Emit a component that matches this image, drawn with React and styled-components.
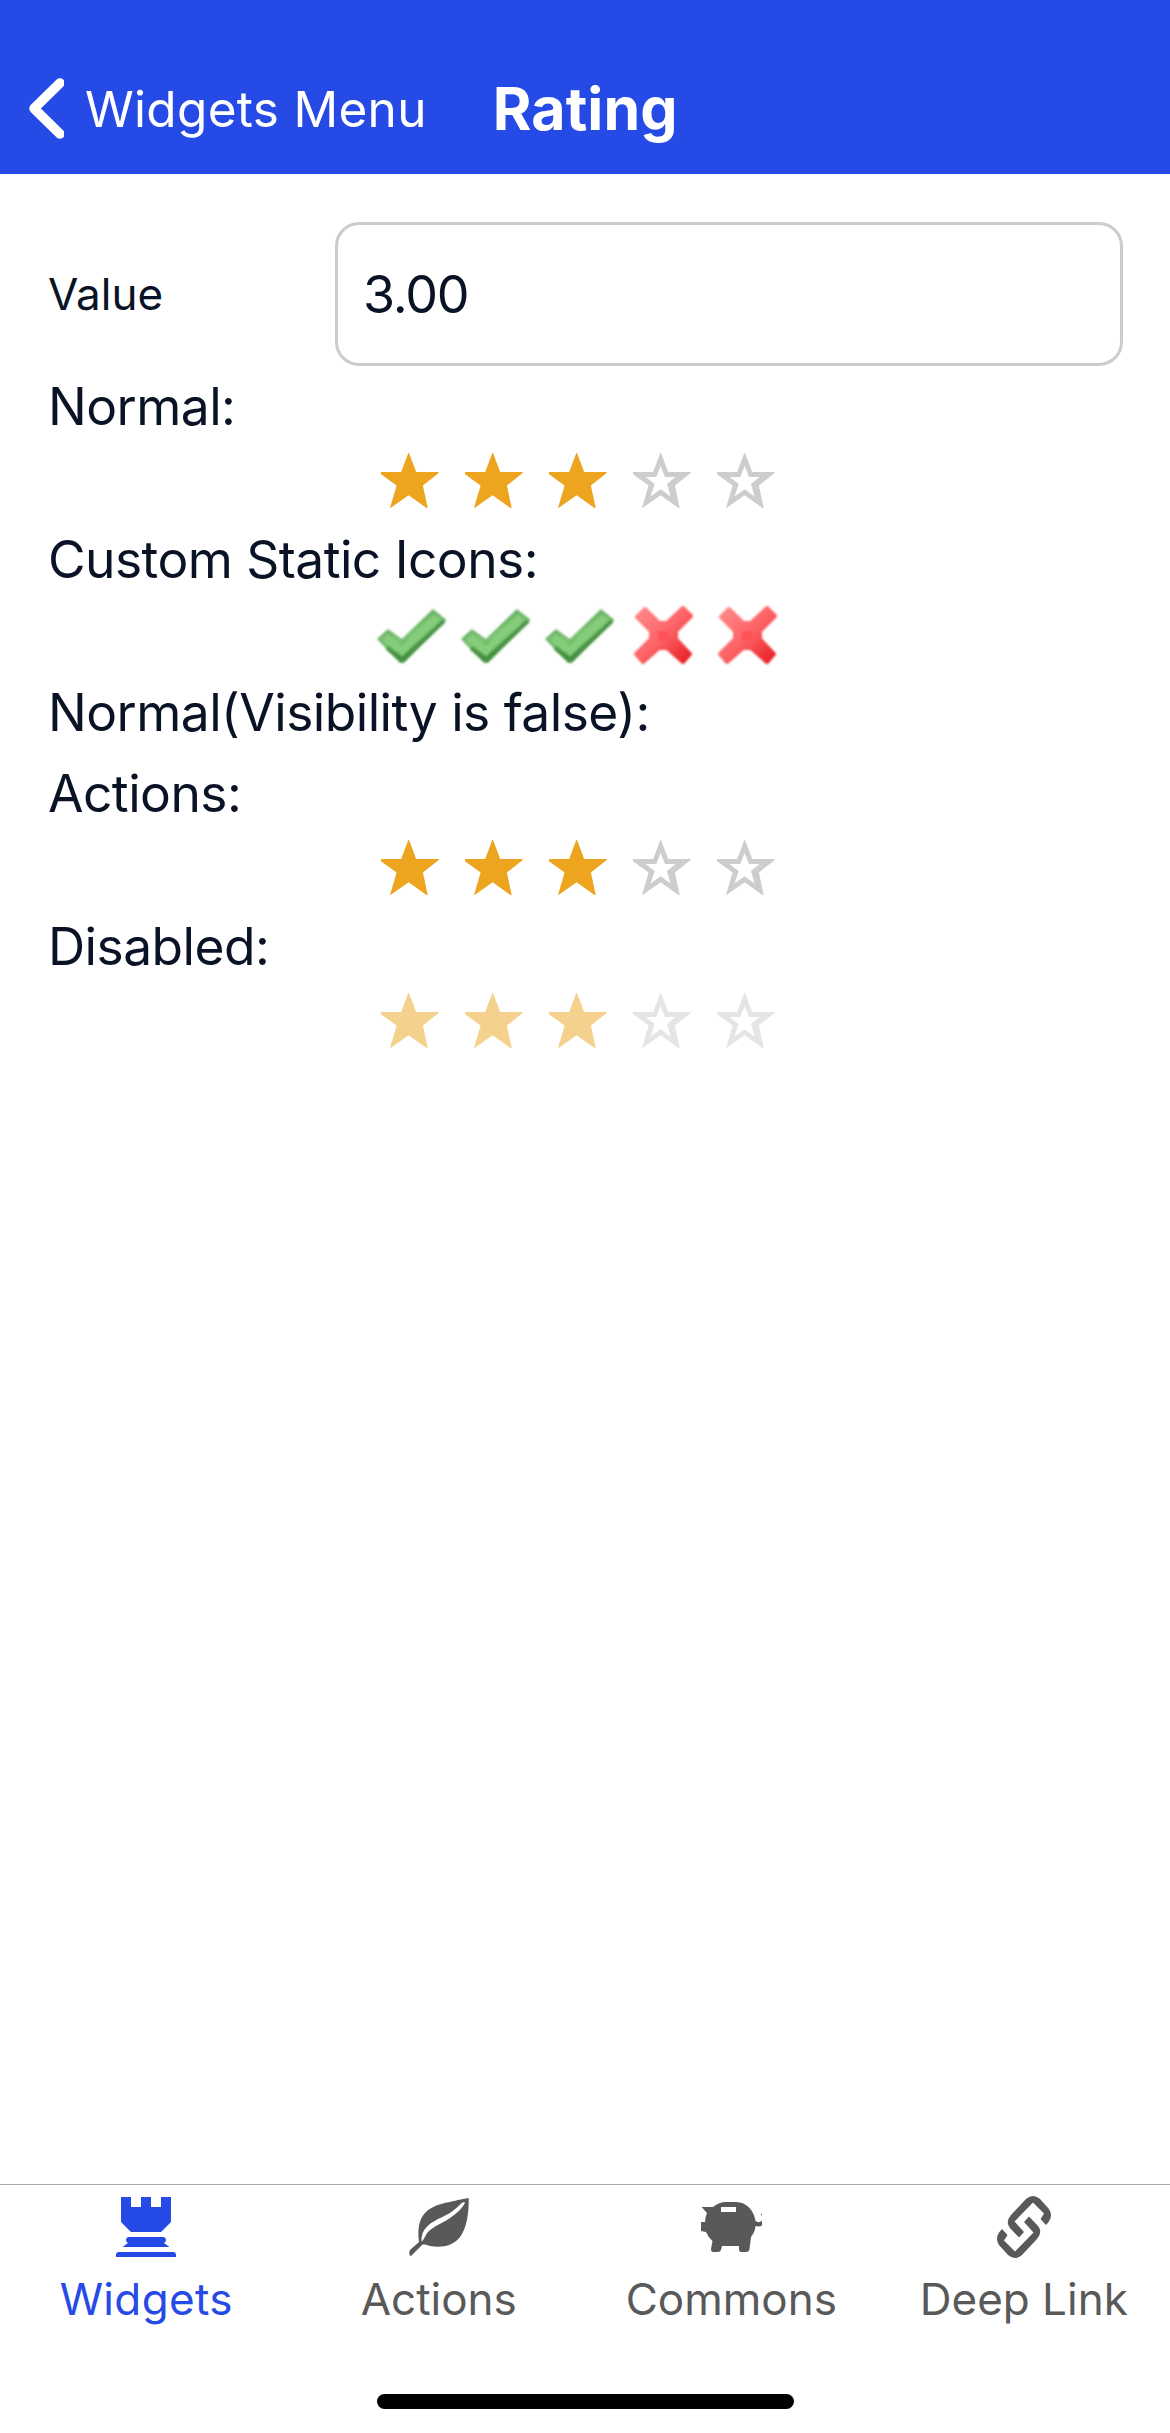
import React from "react";
import styled, { createGlobalStyle } from "styled-components";

const Global = createGlobalStyle`
  * { box-sizing: border-box; }
  body { margin: 0; background: #fff; font-family: Inter, "Liberation Sans", sans-serif; color: #0a1326; }
`;
const Screen = styled.div`
  height: 2433px; display: flex; flex-direction: column; background: #fff;
`;
const Header = styled.header`
  height: 174px; flex: none; background: #264ae5; color: #fff;
  display: flex; align-items: flex-start; padding: 78px 0 0 28px;
`;
const Text = styled.span`
  display: block; flex: none; white-space: nowrap;
  font-size: ${(p) => p.$size}px; line-height: ${(p) => p.$line || 62}px;
  letter-spacing: ${(p) => p.$track || 0}px;
  font-weight: ${(p) => p.$weight || 400};
  margin-left: ${(p) => p.$left || 0}px;
`;
const Body = styled.main`
  flex: 1; display: flex; flex-direction: column; padding: 48px 47px 0 48px;
`;
const Field = styled.label`
  display: flex; align-items: center; height: 144px; flex: none;
`;
const FieldName = styled.span`
  width: 287px; font-size: 44px; letter-spacing: 0; padding-bottom: 1px;
`;
const Input = styled.div`
  flex: 1; height: 144px; border: 3px solid #ccc; border-radius: 24px;
  display: flex; align-items: center; padding-left: 25px;
  font-size: 52px; letter-spacing: -1.2px;
`;
const Caption = styled.div`
  height: 81px; line-height: 63px; padding-top: 9px; flex: none;
  font-size: 51.5px; letter-spacing: -0.55px; white-space: nowrap;
`;
const Rating = styled.div`
  height: 72px; flex: none; display: flex; padding-left: 327px;
  opacity: ${(p) => (p.$disabled ? 0.5 : 1)};
`;
const Cell = styled.svg`
  width: 84px; height: 72px; display: block; flex: none;
  filter: ${(p) => (p.$soft ? "blur(0.8px)" : "none")};
`;
const Tabs = styled.nav`
  height: 249px; flex: none; border-top: 1px solid #a7a7aa;
  display: grid; grid-template-columns: repeat(4, 1fr); grid-template-rows: 209px 15px;
`;
const Tab = styled.div`
  display: flex; flex-direction: column; align-items: center; padding-top: 10px;
  color: ${(p) => (p.$active ? "#264ae5" : "#595959")};
`;
const TabIcon = styled.svg`
  width: 66px; height: 66px; display: block; fill: currentColor;
`;
const TabName = styled.span`
  font-size: 44px; line-height: 54px; margin-top: 11px; white-space: nowrap;
  letter-spacing: ${(p) => p.$track}px;
`;
const HomeBar = styled.div`
  grid-column: 1 / -1; justify-self: center; width: 417px; height: 15px;
  border-radius: 8px; background: #000;
`;

const STAR = "M6 25H26.2L33.3 6H34L41.2 25H63.7V26L47.9 38.5L52.7 61H51.5L33.6 48.2L15.5 61H15L21.6 38.5L6 27.2Z";
const HOLE = "M33.6 19L29.3 30H18.5L27.7 37L23.5 49.5L33.6 42.3L43.6 49.5L40 37L48.5 30H38Z";

const Star = ({ on }) => (
  <Cell viewBox="0 0 84 72">
    <path fill={on ? "#eda51f" : "#cdcdcd"} fillRule="evenodd" d={on ? STAR : STAR + HOLE} />
  </Cell>
);

const Check = () => (
  <Cell viewBox="0 0 84 72" $soft>
    <defs>
      <linearGradient id="leafGreen" x1="0.35" y1="0.25" x2="0.6" y2="0.75">
        <stop offset="0" stopColor="#6db466" /><stop offset=".5" stopColor="#7fc876" /><stop offset="1" stopColor="#4c9a48" />
      </linearGradient>
    </defs>
    <path fill="url(#leafGreen)" stroke="#69b163" strokeWidth="1.5" strokeLinejoin="round" d="M3 39L13 30L27 40L58 10L70.500 20L29 62L25 62Z" />
    <path fill="none" stroke="#85cc7b" strokeWidth="8" d="M10 37L27 51L62 17" />
    <path fill="none" stroke="#428c40" strokeWidth="4" strokeOpacity=".85" strokeLinejoin="round" d="M12 48L27 61L69 21" />
  </Cell>
);
const Cross = () => (
  <Cell viewBox="0 0 84 72" $soft>
    <defs>
      <linearGradient id="red" x1="0" y1="0" x2="1" y2="1">
        <stop offset="0" stopColor="#ff8a8a" /><stop offset=".5" stopColor="#fd6467" /><stop offset="1" stopColor="#e61c22" />
      </linearGradient>
    </defs>
    <path fill="url(#red)" stroke="url(#red)" strokeWidth="4" strokeLinejoin="round" d="M10 17L18 9L32 23H40L56 8L64 16L49 31V39L63 54L56 62L40 48H32L16 62L9 54L24 39V31Z" />
    <path fill="#ff5257" d="M31 31H41V41H31Z" />
  </Cell>
);

const marks = [1, 2, 3, 4, 5];
const Stars = ({ disabled }) => (
  <Rating $disabled={disabled}>{marks.map((n) => <Star key={n} on={n <= 3} />)}</Rating>
);

const LINK = "M1046 2225L1049 2221.500Q1053 2215 1049 2209L1040 2199Q1033 2193 1026 2199L1011 2215Q1005 2222 1010 2228L1019 2237.500L1024 2232L1014.500 2221.500L1033 2202.500L1044 2213.500L1040.500 2219Z";

export default function App() {
  return (
    <Screen>
      <Global />
      <Header>
        <svg width="36" height="61" viewBox="0 0 36 61" fill="none" stroke="#fff" strokeWidth="9.5" strokeLinecap="round" strokeLinejoin="round">
          <path d="M32 5L6 30.500L32 56" />
        </svg>
        <Text $size={49.5} $left={21} $track={0.3}>Widgets Menu</Text>
        <Text $size={59} $left={66} $weight={700} $track={0.1} $line={61}>Rating</Text>
      </Header>
      <Body>
        <Field>
          <FieldName>Value</FieldName>
          <Input>3.00</Input>
        </Field>
        <Caption>Normal:</Caption>
        <Stars />
        <Caption>Custom Static Icons:</Caption>
        <Rating>{marks.map((n) => (n <= 3 ? <Check key={n} /> : <Cross key={n} />))}</Rating>
        <Caption>Normal(Visibility is false):</Caption>
        <Caption>Actions:</Caption>
        <Stars />
        <Caption>Disabled:</Caption>
        <Stars disabled />
      </Body>
      <Tabs>
        <Tab $active>
          <TabIcon viewBox="113 2195 66 66">
            <path d="M121 2197H131V2207H141V2197H151V2207H161V2197H171V2222L161 2232H131L121 2222ZM128 2237H164Q166 2238 166 2240T164 2243L169.500 2247H122.500L128 2243Q126 2242 126 2240T128 2237ZM119 2252H173Q176 2252 176 2255V2257H116V2255Q116 2252 119 2252Z" />
          </TabIcon>
          <TabName $track={0.35}>Widgets</TabName>
        </Tab>
        <Tab>
          <TabIcon viewBox="406 2195 66 66">
            <path fillRule="evenodd" d="M468.700 2198C469 2212 467 2228 460 2237C453 2246 442 2248 430 2246C427 2245 424 2244 422 2245L411 2256C409 2256 409 2252 410 2250L419 2242C418 2234 418 2226 421 2219C426 2208 438 2204 450 2202C458 2200 462 2199 468.700 2198ZM465 2202C461 2202 461 2205 450 2213C445 2216 439 2218 433 2222C426 2226 421 2232 421.500 2241.500C423 2241 424 2238 425 2237C427 2232 430 2230 433 2228C440 2223 445 2222 450 2218C456 2214 464 2207 465 2202Z" />
          </TabIcon>
          <TabName $track={0}>Actions</TabName>
        </Tab>
        <Tab>
          <TabIcon viewBox="698 2195 66 66">
            <path fillRule="evenodd" d="M701.500 2207H713Q719 2202 726 2202H736C747 2202 754 2211 755.500 2221Q759 2223.500 762 2220.500V2225.500Q759 2227 755.500 2226Q755 2232 751 2237L749.500 2249Q749 2252 746 2252H741Q739 2252 739 2249V2246H722L721 2250Q720 2252 718 2252H713Q711 2252 711 2249L712.500 2241Q708 2237 706 2232L701 2231V2222H705Q705 2217 707 2213ZM721 2207V2212H736V2207ZM762 2213.500L760.800 2214.500L762 2216Z" />
          </TabIcon>
          <TabName $track={0}>Commons</TabName>
        </Tab>
        <Tab>
          <TabIcon viewBox="991 2195 66 66">
            <path d={LINK} />
            <path d={LINK} transform="rotate(180 1024 2227)" />
          </TabIcon>
          <TabName $track={0}>Deep Link</TabName>
        </Tab>
        <HomeBar />
      </Tabs>
    </Screen>
  );
}
